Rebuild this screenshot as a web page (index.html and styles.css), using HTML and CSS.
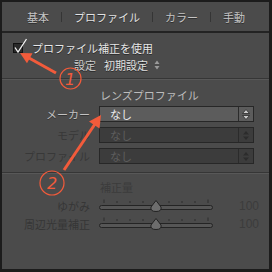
FILE: index.html
```html
<!DOCTYPE html>
<html lang="ja">
<head>
  <meta charset="UTF-8">
  <title>レンズ補正</title>
  <link rel="stylesheet" href="styles.css">
</head>
<body>
  <div class="panel">
    <!-- Tab bar -->
    <div class="tabs">
      <span class="tab">基本</span>
      <span class="tab-sep"></span>
      <span class="tab tab-active">プロファイル</span>
      <span class="tab-sep"></span>
      <span class="tab">カラー</span>
      <span class="tab-sep"></span>
      <span class="tab">手動</span>
    </div>

    <!-- Enable profile -->
    <div class="enable">
      <div class="check-row">
        <svg class="checkbox" width="16" height="18" viewBox="0 0 16 18">
          <rect x="0.5" y="5.5" width="9" height="9" fill="#2a2a2a" stroke="#111"/>
          <path d="M2 9.5 L5 14 L13.5 1" fill="none" stroke="#f2f2f2" stroke-width="1.3"/>
        </svg>
        <span class="check-text">プロファイル補正を使用</span>
      </div>
      <div class="preset-row">
        <span class="preset-label">設定</span>
        <span class="preset-value">初期設定</span>
        <svg class="updown" width="6" height="10" viewBox="0 0 6 10">
          <path d="M3 0.5 L5.5 4 L0.5 4 Z M3 9.5 L5.5 6 L0.5 6 Z" fill="#9a9a9a"/>
        </svg>
      </div>
    </div>

    <div class="groove"></div>

    <!-- Lens profile -->
    <div class="lens">
      <div class="heading">レンズプロファイル</div>
      <div class="field">
        <span class="label">メーカー</span>
        <div class="select">
          <span class="select-text">なし</span>
          <span class="select-btn">
            <svg width="8" height="11" viewBox="0 0 8 11">
              <path d="M4 0.5 L7.5 4.5 L0.5 4.5 Z M4 10.5 L7.5 6.5 L0.5 6.5 Z" fill="#c9c9c9" stroke="#2a2a2a" stroke-width="0.8"/>
            </svg>
          </span>
        </div>
      </div>
      <div class="field field-off">
        <span class="label">モデル</span>
        <div class="select">
          <span class="select-text">なし</span>
          <span class="select-btn">
            <svg width="8" height="11" viewBox="0 0 8 11">
              <path d="M4 1 L7 4.5 L1 4.5 Z M4 10 L7 6.5 L1 6.5 Z" fill="#2c2c2c"/>
            </svg>
          </span>
        </div>
      </div>
      <div class="field field-off">
        <span class="label">プロファイル</span>
        <div class="select">
          <span class="select-text">なし</span>
          <span class="select-btn">
            <svg width="8" height="11" viewBox="0 0 8 11">
              <path d="M4 1 L7 4.5 L1 4.5 Z M4 10 L7 6.5 L1 6.5 Z" fill="#2c2c2c"/>
            </svg>
          </span>
        </div>
      </div>
    </div>

    <div class="groove groove-low"></div>

    <!-- Amount -->
    <div class="amount">
      <div class="heading heading-off">補正量</div>
      <div class="slider-row">
        <span class="label">ゆがみ</span>
        <svg class="slider" width="116" height="14" viewBox="0 0 116 14">
          <path d="M6 0.5 V4 M110 0.5 V4 M19 2 V4 M32 2 V4 M45 2 V4 M71 2 V4 M84 2 V4 M97 2 V4" stroke="#2e2e2e" stroke-width="1"/>
          <rect x="1.5" y="6.5" width="113" height="4" rx="2" fill="#565656" stroke="#242424"/>
          <path d="M58 1.5 L63 8 Q64 12.5 58 12.5 Q52 12.5 53 8 Z" fill="#6d6d6d" stroke="#222"/>
        </svg>
        <span class="value">100</span>
      </div>
      <div class="slider-row">
        <span class="label">周辺光量補正</span>
        <svg class="slider" width="116" height="14" viewBox="0 0 116 14">
          <path d="M6 0.5 V4 M110 0.5 V4 M19 2 V4 M32 2 V4 M45 2 V4 M71 2 V4 M84 2 V4 M97 2 V4" stroke="#2e2e2e" stroke-width="1"/>
          <rect x="1.5" y="6.5" width="113" height="4" rx="2" fill="#565656" stroke="#242424"/>
          <path d="M58 1.5 L63 8 Q64 12.5 58 12.5 Q52 12.5 53 8 Z" fill="#6d6d6d" stroke="#222"/>
        </svg>
        <span class="value">100</span>
      </div>
    </div>

    <!-- Red annotations drawn over the panel -->
    <svg class="annotations" width="272" height="272" viewBox="0 0 272 272">
      <g stroke="#f25b3b" fill="#f25b3b">
        <line x1="56" y1="73" x2="29" y2="58" stroke-width="3"/>
        <polygon points="20,53 32.5,53.3 27,63.3" stroke="none"/>
        <line x1="64" y1="170" x2="95" y2="124" stroke-width="3"/>
        <polygon points="101,115 99.5,128.5 89,121.5" stroke="none"/>
        <circle cx="70.5" cy="78.5" r="10.5" fill="none" stroke-width="1.2"/>
        <circle cx="52" cy="183" r="12" fill="none" stroke-width="1.2"/>
      </g>
      <text x="70" y="85" class="note-num">1</text>
      <text x="52" y="189" class="note-num">2</text>
    </svg>
  </div>
</body>
</html>
```

FILE: styles.css
```css
body {
  margin: 0;
  background-color: #4b4b4b;
  font-family: "Noto Sans CJK JP", "Noto Sans", sans-serif;
  font-size: 11px;
  line-height: 16px;
}
.panel {
  position: relative;
  width: 272px;
  height: 272px;
  box-sizing: border-box;
  border: 2px solid #1c1c1c;
  border-right-width: 3px;
  border-bottom-width: 3px;
  background-color: #4b4b4b;
}
.tabs {
  display: flex;
  align-items: center;
  gap: 12px;
  height: 29px;
  padding-left: 25px;
  border-bottom: 2px solid #232323;
}
.tab {
  color: #c4c4c4;
  text-shadow: 0 1px 0 #2f2f2f;
}
.tab-active {
  color: #e2e2e2;
}
.tab-sep {
  width: 1px;
  height: 10px;
  background-color: #353535;
}
.enable {
  padding-top: 5px;
}
.check-row {
  display: flex;
  align-items: flex-end;
  gap: 3px;
  height: 18px;
  padding-left: 11px;
}
.check-text {
  color: #e6e6e6;
  text-shadow: 0 1px 0 #2a2a2a;
}
.preset-row {
  display: flex;
  align-items: center;
  height: 16px;
  margin-top: 1px;
  padding-left: 72px;
}
.preset-label {
  color: #cdcdcd;
  margin-right: 8px;
}
.preset-value {
  color: #e0e0e0;
  margin-right: 6px;
}
.preset-label,
.preset-value {
  text-shadow: 0 1px 0 #2a2a2a;
}
.groove {
  height: 0;
  margin-top: 5px;
  border-top: 1px solid #363636;
  border-bottom: 1px solid #585858;
}
.groove-low {
  margin-top: 8px;
}
.lens {
  padding-top: 7px;
}
.heading {
  height: 16px;
  padding-left: 98px;
  color: #bcbcbc;
}
.heading-off {
  color: #3b3b3b;
}
.field {
  display: grid;
  grid-template-columns: 88px 155px;
  column-gap: 9px;
  align-items: center;
  height: 16px;
  margin-top: 5px;
}
.lens .heading + .field {
  margin-top: 3px;
}
.label {
  text-align: right;
  color: #c2c2c2;
  text-shadow: 0 1px 0 #333;
}
.field-off .label {
  color: #383838;
  text-shadow: none;
}
.select {
  display: flex;
  height: 16px;
  box-sizing: border-box;
  border: 1px solid #272727;
  background-color: #5c5c5c;
}
.select-text {
  flex: 1;
  padding-left: 10px;
  line-height: 14px;
  color: #ececec;
}
.select-btn {
  display: flex;
  align-items: center;
  justify-content: center;
  width: 14px;
  border-left: 1px solid #2b2b2b;
}
.field-off .select {
  background-color: #3c3c3c;
}
.field-off .select-text {
  color: #5e5e5e;
}
.amount {
  padding-top: 5px;
}
.slider-row {
  display: grid;
  grid-template-columns: 88px 116px auto;
  column-gap: 8px;
  align-items: center;
  height: 16px;
  margin-top: 2px;
}
.amount .heading + .slider-row {
  margin-top: 3px;
}
.slider-row .label {
  color: #363636;
  text-shadow: none;
}
.slider {
  display: block;
}
.value {
  margin-left: 17px;
  color: #3c3c3c;
  font-family: "Liberation Sans", sans-serif;
  font-size: 12px;
}
.annotations {
  position: absolute;
  top: -2px;
  left: -2px;
  pointer-events: none;
}
.note-num {
  fill: #f25b3b;
  font-family: "DejaVu Sans", sans-serif;
  font-size: 16px;
  font-style: italic;
  font-weight: 200;
  text-anchor: middle;
}
```
